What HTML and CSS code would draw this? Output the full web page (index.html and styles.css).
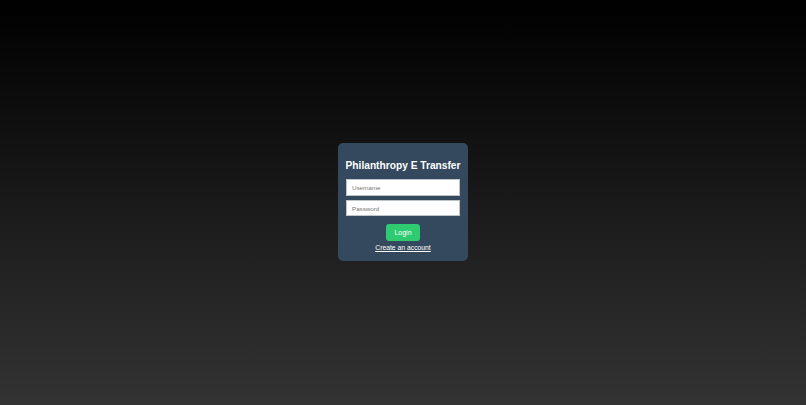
FILE: index.html
```html
<!DOCTYPE html>
<html>
<head>
<meta charset="utf-8">
<title>Philanthropy E Transfer</title>
<link rel="stylesheet" href="styles.css">
</head>
<body>
<div class="page">
  <form class="card">
    <h1 class="title">Philanthropy E Transfer</h1>
    <input class="field field-first" type="text" placeholder="Username">
    <input class="field" type="password" placeholder="Password">
    <button class="btn" type="button">Login</button>
    <a class="link" href="#">Create an account</a>
  </form>
</div>
</body>
</html>
```
FILE: styles.css
```css
html, body {
  margin: 0;
  padding: 0;
  height: 100%;
}
body {
  background: linear-gradient(to bottom, #000000 0%, #333333 100%);
  font-family: "Liberation Sans", Arial, sans-serif;
}
.page {
  height: 405px;
  box-sizing: border-box;
  padding-top: 143px;
  display: flex;
  align-items: flex-start;
  justify-content: center;
}
.card {
  width: 114px;
  padding: 8px 8px 9px 8px;
  background: #34495e;
  border-radius: 5px;
  display: flex;
  flex-direction: column;
  align-items: center;
  box-sizing: content-box;
}
.title {
  margin: 9px 0 7px 0;
  font-size: 10.2px;
  font-weight: bold;
  color: #ffffff;
  white-space: nowrap;
  line-height: 12px;
}
.field {
  width: 114px;
  height: 16px;
  box-sizing: border-box;
  margin: 0 0 4px 0;
  padding: 0 5px;
  border: 1px solid #bfc4c8;
  background: #ffffff;
  font-family: "Liberation Sans", Arial, sans-serif;
  font-size: 6.2px;
  outline: none;
}
.field-first {
  height: 17px;
}
.field::placeholder {
  color: #777777;
}
.btn {
  margin-top: 4px;
  width: 34px;
  height: 17px;
  border: none;
  border-radius: 3px;
  background: #2ecc71;
  color: #ffffff;
  font-family: "Liberation Sans", Arial, sans-serif;
  font-size: 7px;
  padding: 0;
}
.link {
  margin-top: 3px;
  color: #ffffff;
  font-size: 6.8px;
  line-height: 8px;
  text-decoration: underline;
}
```
